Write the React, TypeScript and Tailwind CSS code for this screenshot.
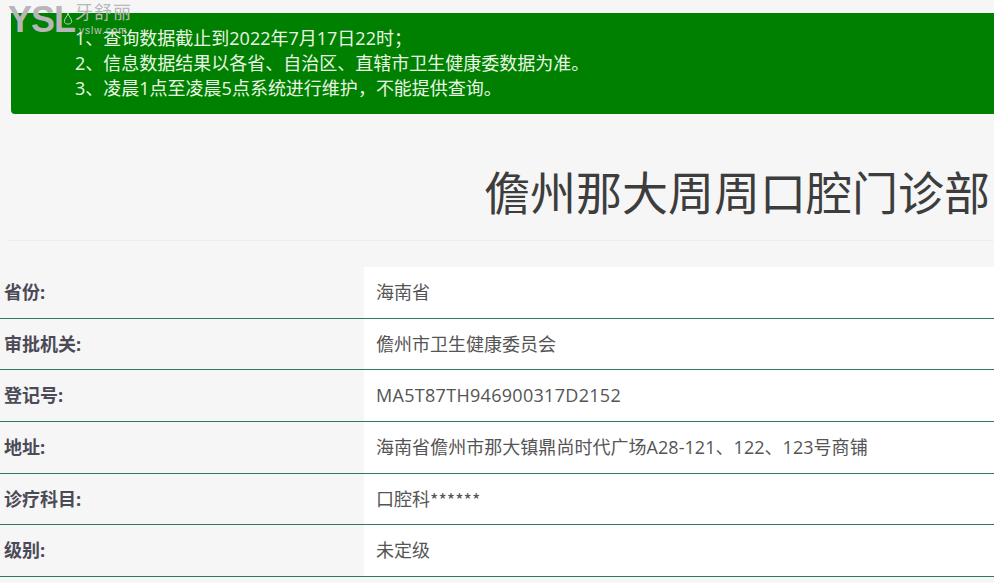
const font = { fontFamily: '"Open Sans", "Noto Sans CJK SC", sans-serif' };
const cjk = { fontFamily: '"Noto Sans CJK SC", sans-serif' };

const rows: [string, React.ReactNode][] = [
  ["省份:", "海南省"],
  ["审批机关:", "儋州市卫生健康委员会"],
  ["登记号:", <span className="tracking-[0.3px]">MA5T87TH946900317D2152</span>],
  ["地址:", <span className="tracking-[0.04px]">海南省儋州市那大镇鼎尚时代广场A28-121、122、123号商铺</span>],
  ["诊疗科目:", <>口腔科<span style={cjk}>******</span></>],
  ["级别:", "未定级"],
];

export default function App() {
  return (
    <div className="relative h-[583px] w-[994px] overflow-hidden bg-[#f6f6f6]" style={font}>
      <div className="pt-[13px] pl-[11px]">
        <div className="h-[101px] rounded-bl-[4px] bg-[#008000] pl-[64px] pt-[13px] text-[18px] leading-[25px] text-[#eaf7e4]">
          <p>1、查询数据截止到2022年7月17日22时{"\uFF1B"}</p>
          <p>2、信息数据结果以各省、自治区、直辖市卫生健康委数据为准。</p>
          <p>3、凌晨1点至凌晨5点系统进行维护{"\uFF0C"}不能提供查询。</p>
        </div>
      </div>

      <h1 className="mt-[45px] flex h-[66px] items-center justify-end pr-[4px] text-[46px] leading-[66px] font-normal whitespace-nowrap text-[#3d3d3d]">
        儋州那大周周口腔门诊部
      </h1>
      <div className="mt-[15px] ml-[8px] h-px bg-[#eeeeee]" />

      <div className="mt-[26px]">
        {rows.map(([label, value]) => (
          <div key={label} className="flex h-[51.7px] border-b border-[#2f7a5a]">
            <div className="flex w-[364px] items-center pl-[4px] text-[18px] font-bold text-[#4b4b57]">{label}</div>
            <div className="flex flex-1 items-center bg-white pl-[12px] text-[18px] whitespace-nowrap text-[#555555]">{value}</div>
          </div>
        ))}
      </div>

      <div className="absolute top-0 left-[8px] flex h-[38px] w-[125px] items-start">
        <span className="mt-[2px] text-[36px] leading-[36px] font-bold tracking-[-1px] whitespace-nowrap text-[#b9b6bb]" style={{ fontFamily: '"Liberation Sans", sans-serif' }}>
          YSL
        </span>
        <svg className="mt-[12px] -ml-[13px] shrink-0" width="12" height="13" viewBox="0 0 12 14" fill="none" stroke="#c9d8c4" strokeWidth="1">
          <path d="M6 1 C6 4 2 7 2 10 C2 12 4 13 6 13 C8 13 10 12 10 10 C10 7 6 4 6 1 Z" />
        </svg>
        <div className="ml-[1px] flex flex-col pt-[1px]">
          <span className="text-[18px] leading-[22px] tracking-[1px] whitespace-nowrap text-[#b9b6bb]">牙舒丽</span>
          <span className="mt-[3px] ml-[4px] text-[10px] leading-[9px] tracking-[1px] text-[#c9c6cb]" style={{ fontFamily: '"Liberation Sans", sans-serif' }}>
            yslw.com
          </span>
        </div>
      </div>
    </div>
  );
}
